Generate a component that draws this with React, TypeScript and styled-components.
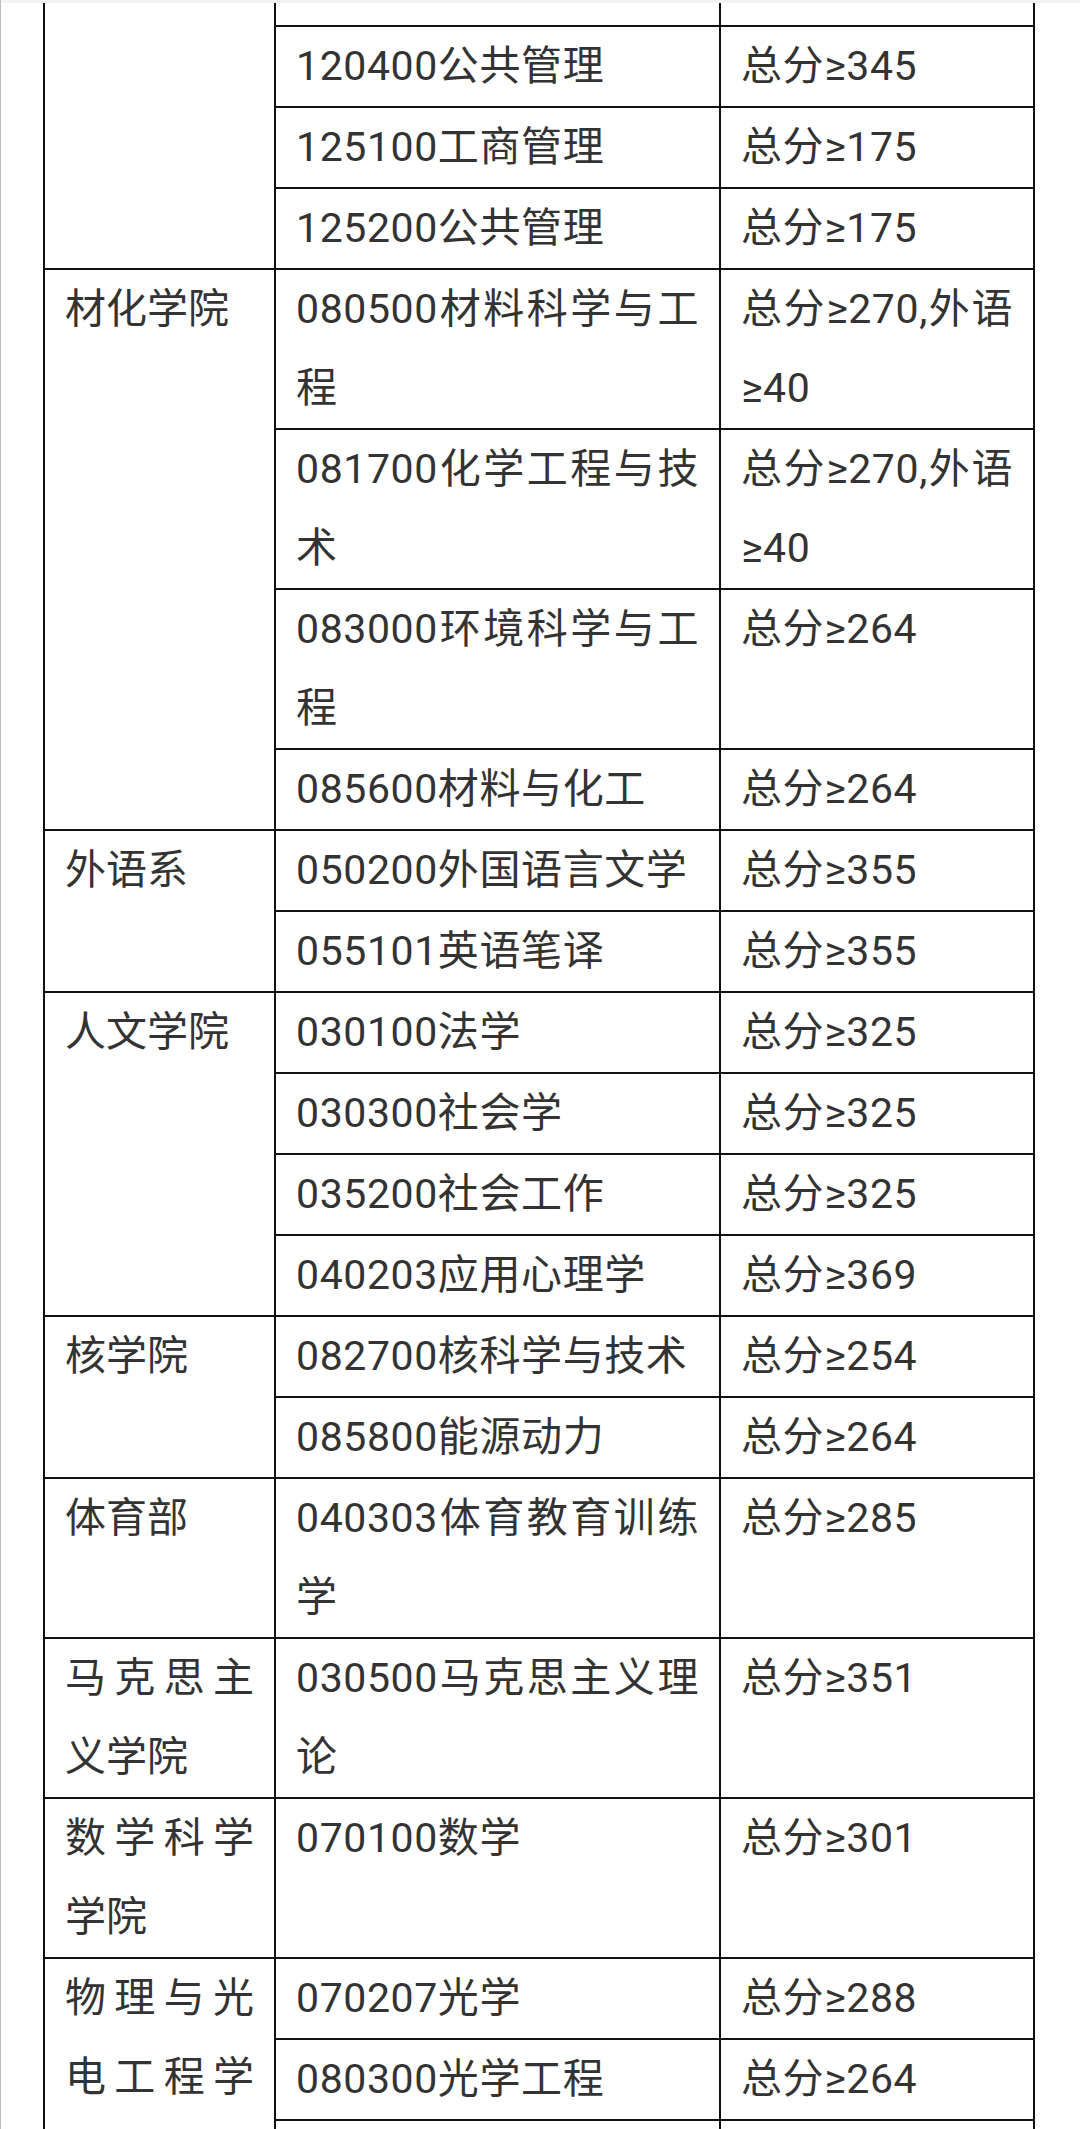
import React from "react";
import styled, { createGlobalStyle } from "styled-components";

const Global = createGlobalStyle`
  html, body { margin: 0; padding: 0; background: #fff; }
  body { font-family: Roboto, "Noto Sans CJK SC", "Noto Sans", sans-serif; }
`;

const Page = styled.div`
  width: 1080px;
  height: 2129px;
  overflow: hidden;
  box-sizing: border-box;
  border-left: 1px solid #bdbdbd;
  background: #fff;
  position: relative;
`;

const TopShade = styled.div`
  position: absolute;
  left: 0;
  top: 0;
  right: 0;
  height: 3px;
  background: #f3f3f3;
  z-index: 1;
`;

const Table = styled.table`
  border-collapse: collapse;
  table-layout: fixed;
  width: 990px;
  margin-left: 42px;
  color: #333;
  font-size: 41px;
  letter-spacing: 0.6px;
`;

const Col = styled.col<{ $w: number }>`
  width: ${(p) => p.$w}px;
`;

const Cell = styled.td<{ $partial?: boolean }>`
  border: 2px solid #111;
  border-top: ${(p) => (p.$partial ? "none" : "2px solid #111")};
  padding: 0 20px;
  vertical-align: top;
  text-align: justify;
  height: ${(p) => (p.$partial ? "25px" : "auto")};
  line-height: ${(p) => (p.$partial ? "25px" : "79px")};
  overflow: hidden;
`;

const NameCell = styled(Cell)`
  letter-spacing: 0;
`;

type Row = [string, string];
type Group = { name: string; rows: Row[]; partialFirst?: boolean };

const groups: Group[] = [
  {
    name: "",
    partialFirst: true,
    rows: [
      ["", ""],
      ["120400公共管理", "总分≥345"],
      ["125100工商管理", "总分≥175"],
      ["125200公共管理", "总分≥175"],
    ],
  },
  {
    name: "材化学院",
    rows: [
      ["080500材料科学与工程", "总分≥270,外语≥40"],
      ["081700化学工程与技术", "总分≥270,外语≥40"],
      ["083000环境科学与工程", "总分≥264"],
      ["085600材料与化工", "总分≥264"],
    ],
  },
  {
    name: "外语系",
    rows: [
      ["050200外国语言文学", "总分≥355"],
      ["055101英语笔译", "总分≥355"],
    ],
  },
  {
    name: "人文学院",
    rows: [
      ["030100法学", "总分≥325"],
      ["030300社会学", "总分≥325"],
      ["035200社会工作", "总分≥325"],
      ["040203应用心理学", "总分≥369"],
    ],
  },
  {
    name: "核学院",
    rows: [
      ["082700核科学与技术", "总分≥254"],
      ["085800能源动力", "总分≥264"],
    ],
  },
  { name: "体育部", rows: [["040303体育教育训练学", "总分≥285"]] },
  { name: "马克思主义学院", rows: [["030500马克思主义理论", "总分≥351"]] },
  { name: "数学科学学院", rows: [["070100数学", "总分≥301"]] },
  {
    name: "物理与光电工程学院",
    rows: [
      ["070207光学", "总分≥288"],
      ["080300光学工程", "总分≥264"],
      ["\u00a0", "\u00a0"],
    ],
  },
];

export default function App() {
  return (
    <Page>
      <Global />
      <TopShade />
      <Table lang="zh-CN">
        <colgroup>
          <Col $w={231} />
          <Col $w={445} />
          <Col $w={314} />
        </colgroup>
        <tbody>
          {groups.map((g, gi) =>
            g.rows.map((r, ri) => {
              const partial = !!g.partialFirst && ri === 0;
              return (
                <tr key={`${gi}-${ri}`}>
                  {ri === 0 && (
                    <NameCell rowSpan={g.rows.length} $partial={partial}>
                      {g.name}
                    </NameCell>
                  )}
                  <Cell $partial={partial}>{r[0]}</Cell>
                  <Cell $partial={partial}>{r[1]}</Cell>
                </tr>
              );
            })
          )}
        </tbody>
      </Table>
    </Page>
  );
}
